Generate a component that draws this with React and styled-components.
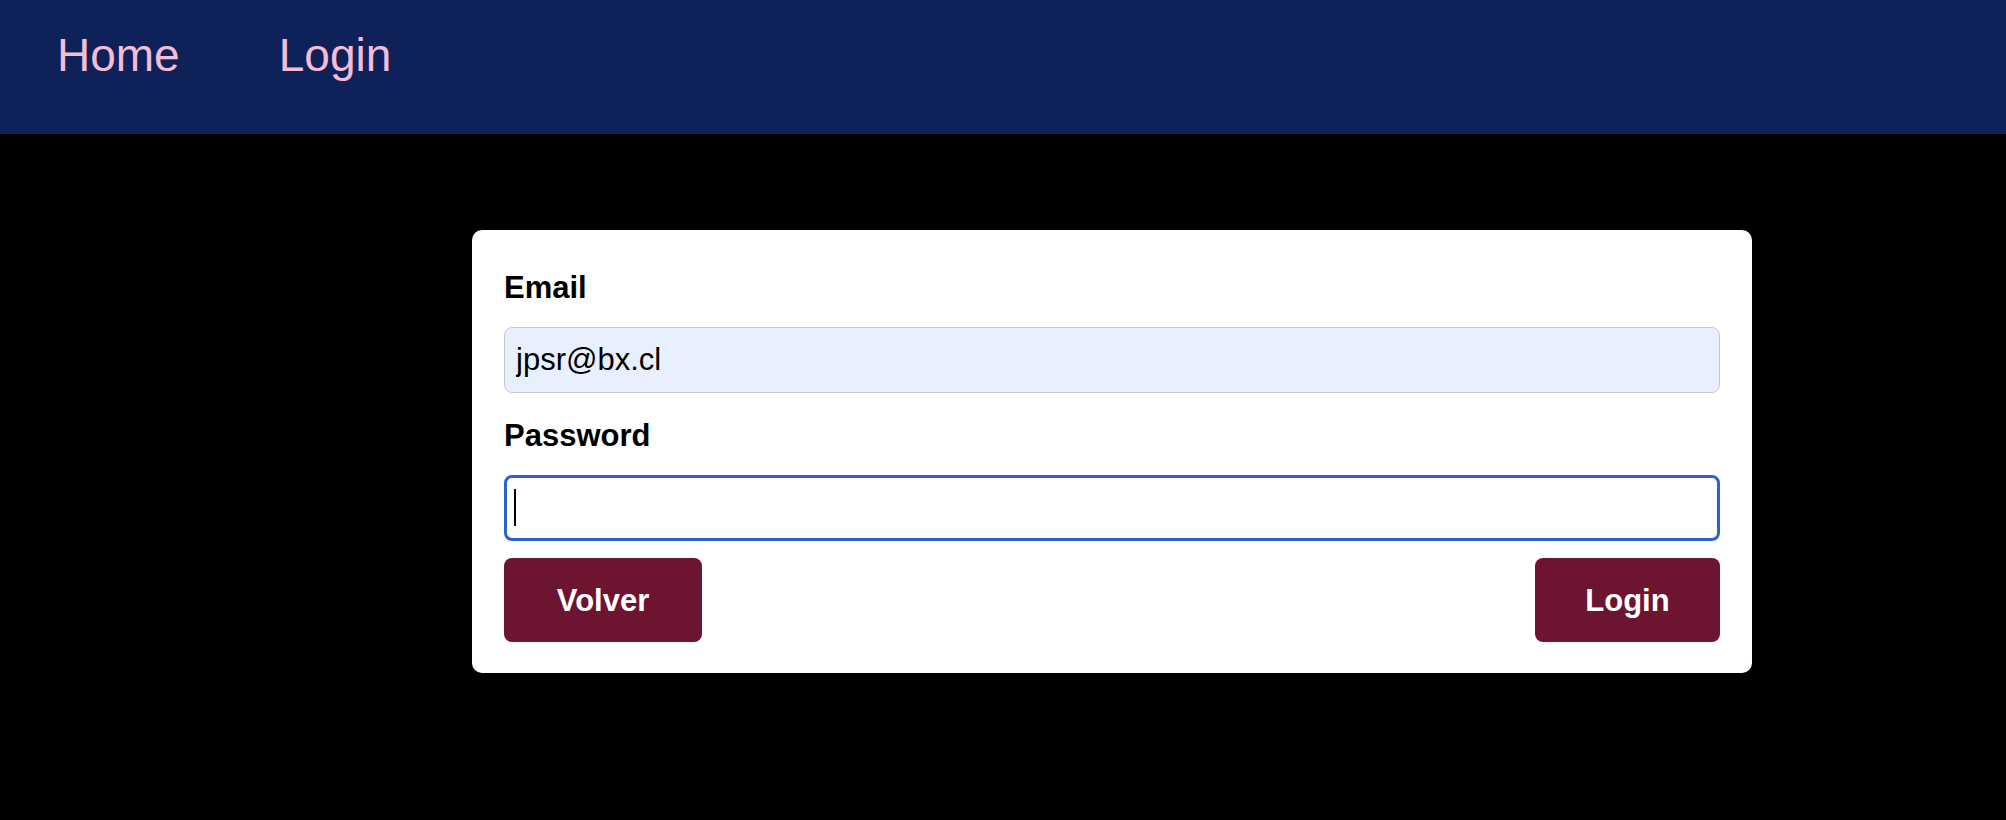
import React from 'react';
import styled, { createGlobalStyle } from 'styled-components';

const GlobalStyle = createGlobalStyle`
    html, body {
        margin: 0;
        padding: 0;
        background: #000000;
        font-family: "Liberation Sans", Arial, sans-serif;
    }
`;

const NavBar = styled.nav`
    height: 134px;
    background: #0f2159;
    display: flex;
    align-items: flex-start;
    gap: 99px;
    padding: 32px 0 0 57px;
    box-sizing: border-box;
`;

const NavLink = styled.a`
    color: #f4bdd6;
    font-size: 46px;
    text-decoration: none;
    line-height: 1;
`;

const Main = styled.main`
    padding: 96px 0 0 472px;
`;

const Card = styled.form`
    width: 1280px;
    box-sizing: border-box;
    background: #ffffff;
    border-radius: 10px;
    padding: 40px 32px 31px;
    display: flex;
    flex-direction: column;
`;

const Label = styled.label`
    font-size: 31px;
    font-weight: 700;
    color: #000000;
    line-height: 36px;
    margin-top: ${(p) => p.$top || 0}px;
`;

const Field = styled.div`
    position: relative;
    margin-top: 21px;
`;

const Input = styled.input`
    display: block;
    height: 66px;
    box-sizing: border-box;
    width: 100%;
    font-family: "Liberation Sans", Arial, sans-serif;
    font-size: 31px;
    color: #000000;
    border-radius: 8px;
    background: ${(p) => (p.$filled ? '#e8f0fe' : '#ffffff')};
    border: ${(p) => (p.$focus ? '3px solid #2c62c9' : '1.5px solid #c9c9c9')};
    padding: 0 0 0 ${(p) => (p.$focus ? 10 : 11)}px;
    outline: none;
    caret-color: transparent;
`;

// text cursor drawn over the focused field
const Caret = styled.span`
    position: absolute;
    left: 10px;
    top: 14px;
    width: 2px;
    height: 37px;
    background: #000000;
    pointer-events: none;
`;

const Actions = styled.div`
    margin-top: 17px;
    display: flex;
    justify-content: space-between;
`;

const Button = styled.button`
    height: 84px;
    width: ${(p) => p.$w}px;
    padding: 2px 0 0;
    border: none;
    border-radius: 8px;
    background: #6d1431;
    color: #ffffff;
    font-family: "Liberation Sans", Arial, sans-serif;
    font-size: 31px;
    font-weight: 700;
    cursor: pointer;
`;

const App = () => {
    return (
        <>
            <GlobalStyle />
            <NavBar>
                <NavLink href="#">Home</NavLink>
                <NavLink href="#">Login</NavLink>
            </NavBar>
            <Main>
                <Card onSubmit={(e) => e.preventDefault()}>
                    <Label htmlFor="email">Email</Label>
                    <Field>
                        <Input id="email" type="email" $filled defaultValue="jpsr@bx.cl" />
                    </Field>
                    <Label htmlFor="password" $top={25}>Password</Label>
                    <Field>
                        <Input id="password" type="password" $focus />
                        <Caret />
                    </Field>
                    <Actions>
                        <Button type="button" $w={198}>Volver</Button>
                        <Button type="submit" $w={185}>Login</Button>
                    </Actions>
                </Card>
            </Main>
        </>
    );
};

export default App;
